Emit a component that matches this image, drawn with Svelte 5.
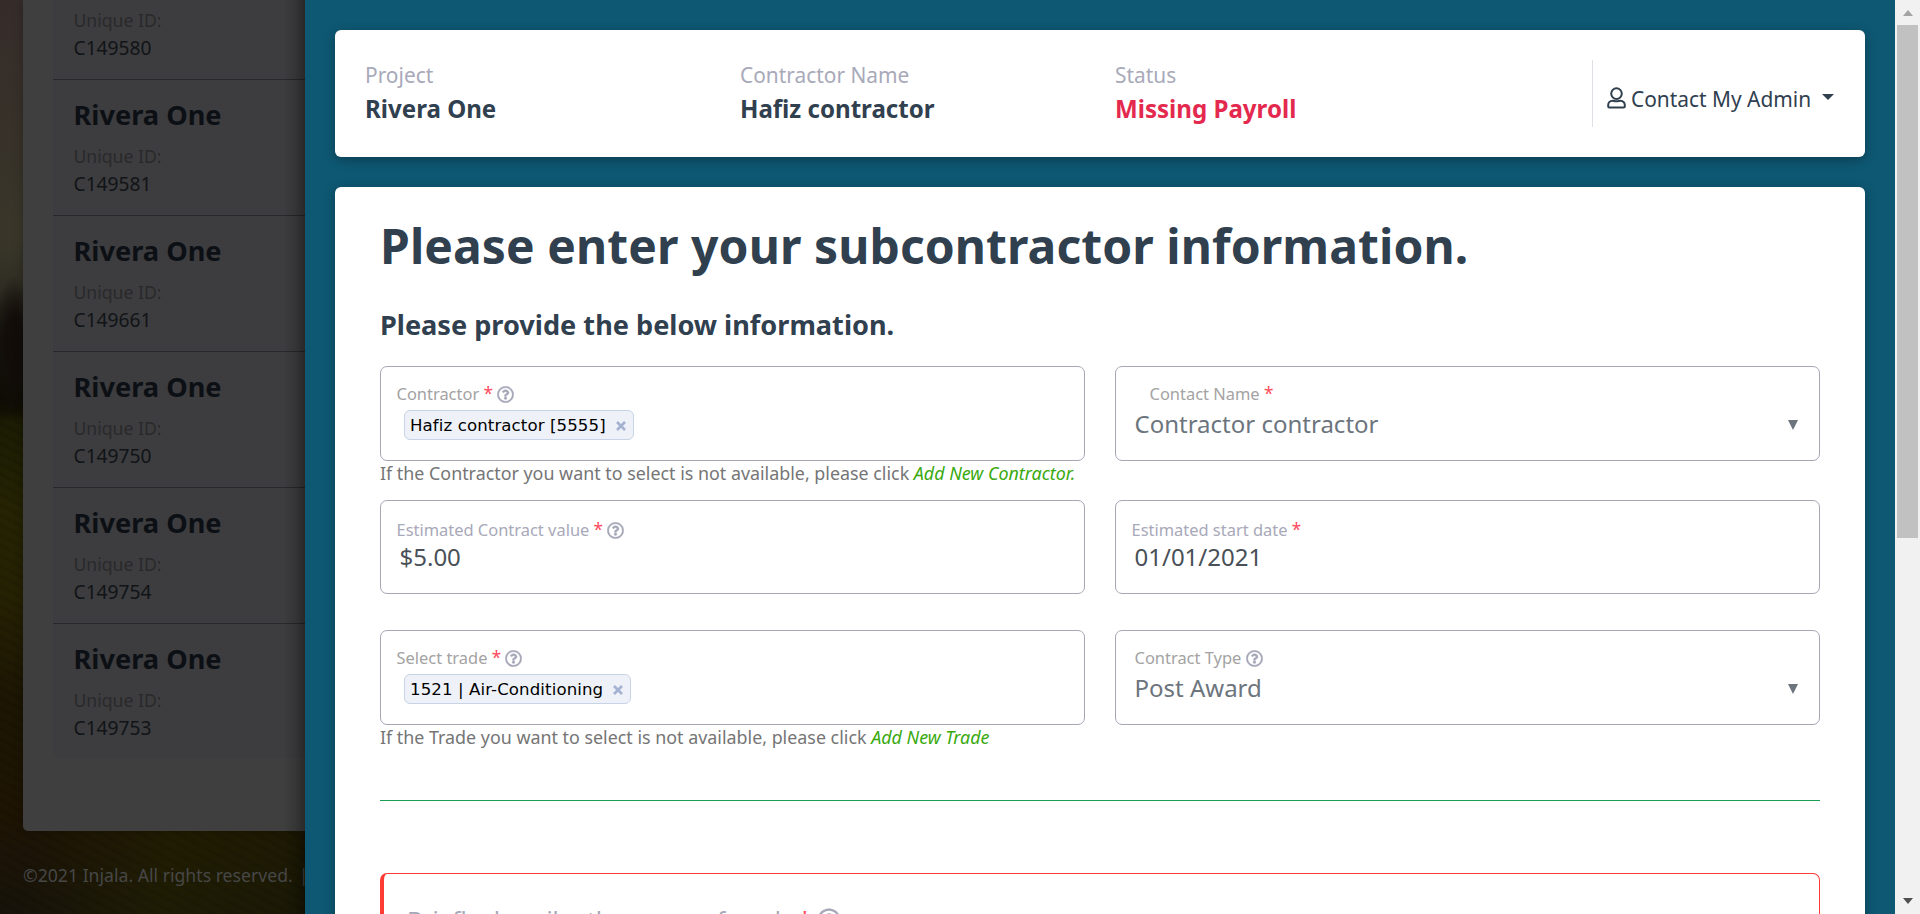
<script>
  const projects = [
    { name: 'Rivera One', id: 'C149580' },
    { name: 'Rivera One', id: 'C149581' },
    { name: 'Rivera One', id: 'C149661' },
    { name: 'Rivera One', id: 'C149750' },
    { name: 'Rivera One', id: 'C149754' },
    { name: 'Rivera One', id: 'C149753' }
  ];
</script>

{#snippet help(size)}
  <svg class="help" width={size} height={size} viewBox="0 0 512 512" fill="currentColor"><path d="M256 8C119 8 8 119 8 256s111 248 248 248 248-111 248-248S393 8 256 8zm0 448c-110.500 0-200-89.400-200-200 0-110.500 89.500-200 200-200 110.500 0 200 89.500 200 200 0 110.500-89.400 200-200 200zm107.200-255.200c0 67.100-72.400 68.100-72.400 92.900V300c0 6.600-5.400 12-12 12h-45.600c-6.600 0-12-5.400-12-12v-8.700c0-35.700 27.100-50 47.600-61.500 17.600-9.800 28.300-16.500 28.300-29.600 0-17.200-22-28.700-39.800-28.700-23.200 0-33.900 11-48.900 30-4.100 5.100-11.500 6.100-16.700 2.100l-27.800-21.100c-5.100-3.900-6.300-11.100-2.600-16.400C184.800 131.500 214.900 112 261.800 112c49.100 0 101.500 38.300 101.500 88.800zM298 368c0 23.200-18.800 42-42 42s-42-18.800-42-42 18.800-42 42-42 42 18.800 42 42z" /></svg>
{/snippet}

{#snippet chip(text)}
  <span class="chip">{text}<svg width="10" height="10" viewBox="0 0 10 10"><path d="M1 1l8 8M9 1l-8 8" /></svg></span>
{/snippet}

<div class="page">
  <aside>
    <div class="panel">
      <ul>
        {#each projects as project}
          <li>
            <h3>{project.name}</h3>
            <span class="key">Unique ID:</span>
            <span class="id">{project.id}</span>
          </li>
        {/each}
      </ul>
    </div>
    <footer>©2021 Injala. All rights reserved.<span class="bar">|</span></footer>
  </aside>

  <main>
    <header class="card">
      <div class="info"><span>Project</span><b>Rivera One</b></div>
      <div class="info"><span>Contractor Name</span><b>Hafiz contractor</b></div>
      <div class="info"><span>Status</span><b class="alert">Missing Payroll</b></div>
      <div class="contact">
        <svg width="19" height="22" viewBox="0 0 19 22" fill="none" stroke="currentColor" stroke-width="2"><circle cx="9.500" cy="6.600" r="5.300" /><path d="M5.600 13.700C3 13.700 1.200 15.600 1.200 18v1.400q0 1.100 1.100 1.100h14.400q1.100 0 1.100-1.100V18c0-2.400-1.800-4.300-4.400-4.300-1.300 0-2 .6-3.900.6s-2.600-.6-3.900-.6z" /></svg>
        <span>Contact My Admin</span>
        <i class="caret"></i>
      </div>
    </header>

    <section class="card form">
      <h1>Please enter your subcontractor information.</h1>
      <h2>Please provide the below information.</h2>

      <div class="row first">
        <div class="field">
          <div class="box tall">
            <div class="label">Contractor <em>*</em> {@render help(17)}</div>
            {@render chip('Hafiz contractor [5555]')}
          </div>
          <p class="hint">If the Contractor you want to select is not available, please click <a>Add New Contractor.</a></p>
        </div>
        <div class="field">
          <div class="box tall">
            <div class="label indent">Contact Name <em>*</em></div>
            <div class="value select">Contractor contractor<i></i></div>
          </div>
        </div>
      </div>

      <div class="row second">
        <div class="box low">
          <div class="label cool">Estimated Contract value <em>*</em> {@render help(17)}</div>
          <div class="value">$5.00</div>
        </div>
        <div class="box low">
          <div class="label cool">Estimated start date <em>*</em></div>
          <div class="value">01/01/2021</div>
        </div>
      </div>

      <div class="row third">
        <div class="field">
          <div class="box tall">
            <div class="label">Select trade <em>*</em> {@render help(17)}</div>
            {@render chip('1521 | Air-Conditioning')}
          </div>
          <p class="hint">If the Trade you want to select is not available, please click <a>Add New Trade</a></p>
        </div>
        <div class="field">
          <div class="box tall">
            <div class="label nudge">Contract Type {@render help(17)}</div>
            <div class="value select">Post Award<i></i></div>
          </div>
        </div>
      </div>

      <hr />

      <div class="scope">Briefly describe the scope of work: <em>*</em> {@render help(24)}</div>
    </section>
  </main>

  <div class="scrollbar">
    <i class="up"></i>
    <div class="thumb"></div>
    <i class="down"></i>
  </div>
</div>

<style>
  :global(body) { overflow: hidden; }
  * { box-sizing: border-box; }
  .page {
    display: flex;
    width: 1920px;
    height: 914px;
    overflow: hidden;
    font-family: "Noto Sans", "Open Sans", sans-serif;
    color: #30404f;
  }
  h1, h2, h3, p, ul { margin: 0; padding: 0; }

  aside {
    position: relative;
    width: 305px;
    height: 914px;
    flex: none;
    overflow: hidden;
    padding-left: 23px;
    background:
      radial-gradient(ellipse 20px 70px at 14px 345px, rgba(18, 12, 9, .9) 40%, transparent 100%),
      repeating-linear-gradient(28deg, rgba(0, 0, 0, .09) 0 2px, transparent 5px 9px) 0 420px / 100% 494px no-repeat,
      linear-gradient(100deg, transparent 30px, rgba(34, 32, 2, .7) 170px, rgba(30, 29, 2, .6) 305px) 0 831px / 100% 83px no-repeat,
      linear-gradient(180deg, #352c2a 0, #373129 130px, #393629 240px, #302e24 285px, #16140d 335px, #0e0d05 400px, #111003 412px, #1b1c03 422px, #252303 510px, #252103 600px, #1c1603 700px, #1e1404 820px, #17130a 914px);
  }
  aside::after {
    content: "";
    position: absolute;
    inset: 0 0 0 auto;
    width: 22px;
    background: linear-gradient(90deg, transparent, rgba(0, 0, 0, .12) 50%, rgba(0, 0, 0, .34));
  }
  .panel {
    height: 831px;
    padding-left: 30px;
    background: #3f3f3f;
    border-radius: 0 0 0 5px;
    box-shadow: 0 0 8px rgba(0, 0, 0, .25);
  }
  ul {
    height: 758px;
    overflow: hidden;
    display: flex;
    flex-direction: column;
    justify-content: flex-end;
    background: #3d3d3f;
    list-style: none;
  }
  li {
    height: 136px;
    flex: none;
    padding: 18px 0 0 20.500px;
    border-bottom: 1px solid #27282b;
    display: flex;
    flex-direction: column;
  }
  li:last-child { height: 134px; border: 0; }
  h3 { font-size: 27.200px; line-height: 34px; color: #0c1015; }
  .key { margin-top: 11px; font-size: 17.600px; line-height: 26px; color: #29292b; }
  .id { font-size: 19.200px; line-height: 28px; color: #111417; margin-top: 1px; }
  footer { padding-top: 30px; font-size: 17.650px; line-height: 28px; color: #474747; white-space: nowrap; }
  .bar { margin-left: 6px; }

  main {
    width: 1590px;
    height: 914px;
    flex: none;
    overflow: hidden;
    padding: 30px;
    background: #0e5873;
    display: flex;
    flex-direction: column;
    gap: 30px;
  }
  .card { background: #fff; border-radius: 6px; box-shadow: 0 3px 12px rgba(0, 0, 0, .3); }
  header { height: 127px; flex: none; display: flex; padding: 30px 30px 0; }
  .info { width: 375px; flex: none; display: flex; flex-direction: column; }
  .info span { font-size: 20.900px; line-height: 30px; color: #a8a9b9; }
  .info b { font-size: 24.100px; line-height: 36px; margin-top: 1px; }
  .info .alert { color: #e32a4e; }
  .contact {
    margin-left: auto;
    height: 67px;
    width: 243px;
    border-left: 1px solid #dfe0e5;
    padding: 10px 0 0 14px;
    display: flex;
    align-items: center;
    font-size: 20.900px;
    white-space: nowrap;
  }
  .contact svg { margin: -2px 5px 0 0; }
  .contact span { padding-top: 1px; }
  .caret { margin: -3px 0 0 11px; border: 6.500px solid transparent; border-top-color: #30404f; border-bottom: 0; }

  .form { flex: none; height: 900px; padding: 0 45px; }
  h1 { padding-top: 27px; font-size: 48px; line-height: 64px; letter-spacing: .08px; }
  h2 { padding-top: 28px; font-size: 27.130px; line-height: 38px; }
  .row { display: grid; grid-template-columns: 705px 705px; column-gap: 30px; }
  .row.first { margin-top: 22px; height: 134px; }
  .row.second { height: 130px; }
  .row.third { height: 170px; }
  .box { border: 1px solid #a6a6b6; border-radius: 7px; padding: 14px 0 0 15.500px; }
  .tall { height: 95px; }
  .low { height: 94px; padding-top: 16px; }
  .label { font-size: 16.450px; line-height: 26px; height: 26px; color: #a3a3a3; white-space: nowrap; }
  .cool { color: #a8a9b9; }
  .indent { padding-left: 18px; }
  .nudge { padding-left: 3px; }
  em { color: #ff4a5c; font-style: normal; }
  .label em { font-size: 17.200px; line-height: 0; }
  .help { color: #a6a7b8; vertical-align: -2.500px; stroke: currentColor; stroke-width: 10; }
  .value { padding-left: 3px; font-size: 24px; line-height: 30px; color: #495057; }
  .low .value { margin-top: -1px; }
  .select { display: flex; align-items: center; justify-content: space-between; padding-right: 21px; color: #6c757d; margin-top: 2px; }
  .select i { margin-top: 2px; border: 5.500px solid transparent; border-top: 10px solid #6c757d; border-bottom: 0; }
  .chip {
    margin: 3px 0 0 7.500px;
    width: fit-content;
    height: 30px;
    padding: 1px 7px 0 5px;
    display: flex;
    align-items: center;
    gap: 10px;
    background: #eef2f8;
    border: 1px solid #c8d3e6;
    border-radius: 6px;
    font: 16.600px "DejaVu Sans", Verdana, sans-serif;
    letter-spacing: .1px;
    white-space: nowrap;
    color: #000;
  }
  .chip svg { fill: none; stroke: #a4b2d2; stroke-width: 2.600; }
  .hint { font-size: 17.860px; line-height: 24px; color: #757575; white-space: nowrap; }
  .hint a { font-style: italic; color: #39a90e; }
  hr { margin: 0; border: 0; height: 1px; background: #1aa053; }
  .scope {
    margin-top: 72px;
    height: 120px;
    border: 1px solid #ff3b35;
    border-left-width: 4px;
    border-radius: 7px;
    padding: 28px 0 0 23px;
    font-size: 24px;
    line-height: 36px;
    color: #a6a7b8;
    white-space: nowrap;
  }
  .scope em { margin: 0 -1px 0 -2px; }
  .scope .help { vertical-align: -2.500px; stroke: none; }

  .scrollbar {
    width: 25px;
    height: 914px;
    flex: none;
    background: #f1f1f1;
    display: flex;
    flex-direction: column;
    align-items: center;
  }
  .up { margin: 10px 0 9px; border: 5.500px solid transparent; border-bottom: 6px solid #a3a3a3; border-top: 0; }
  .thumb { width: 21px; height: 513px; background: #c1c1c1; }
  .down { margin-top: 360px; border: 5.500px solid transparent; border-top: 6px solid #505050; border-bottom: 0; }
</style>
